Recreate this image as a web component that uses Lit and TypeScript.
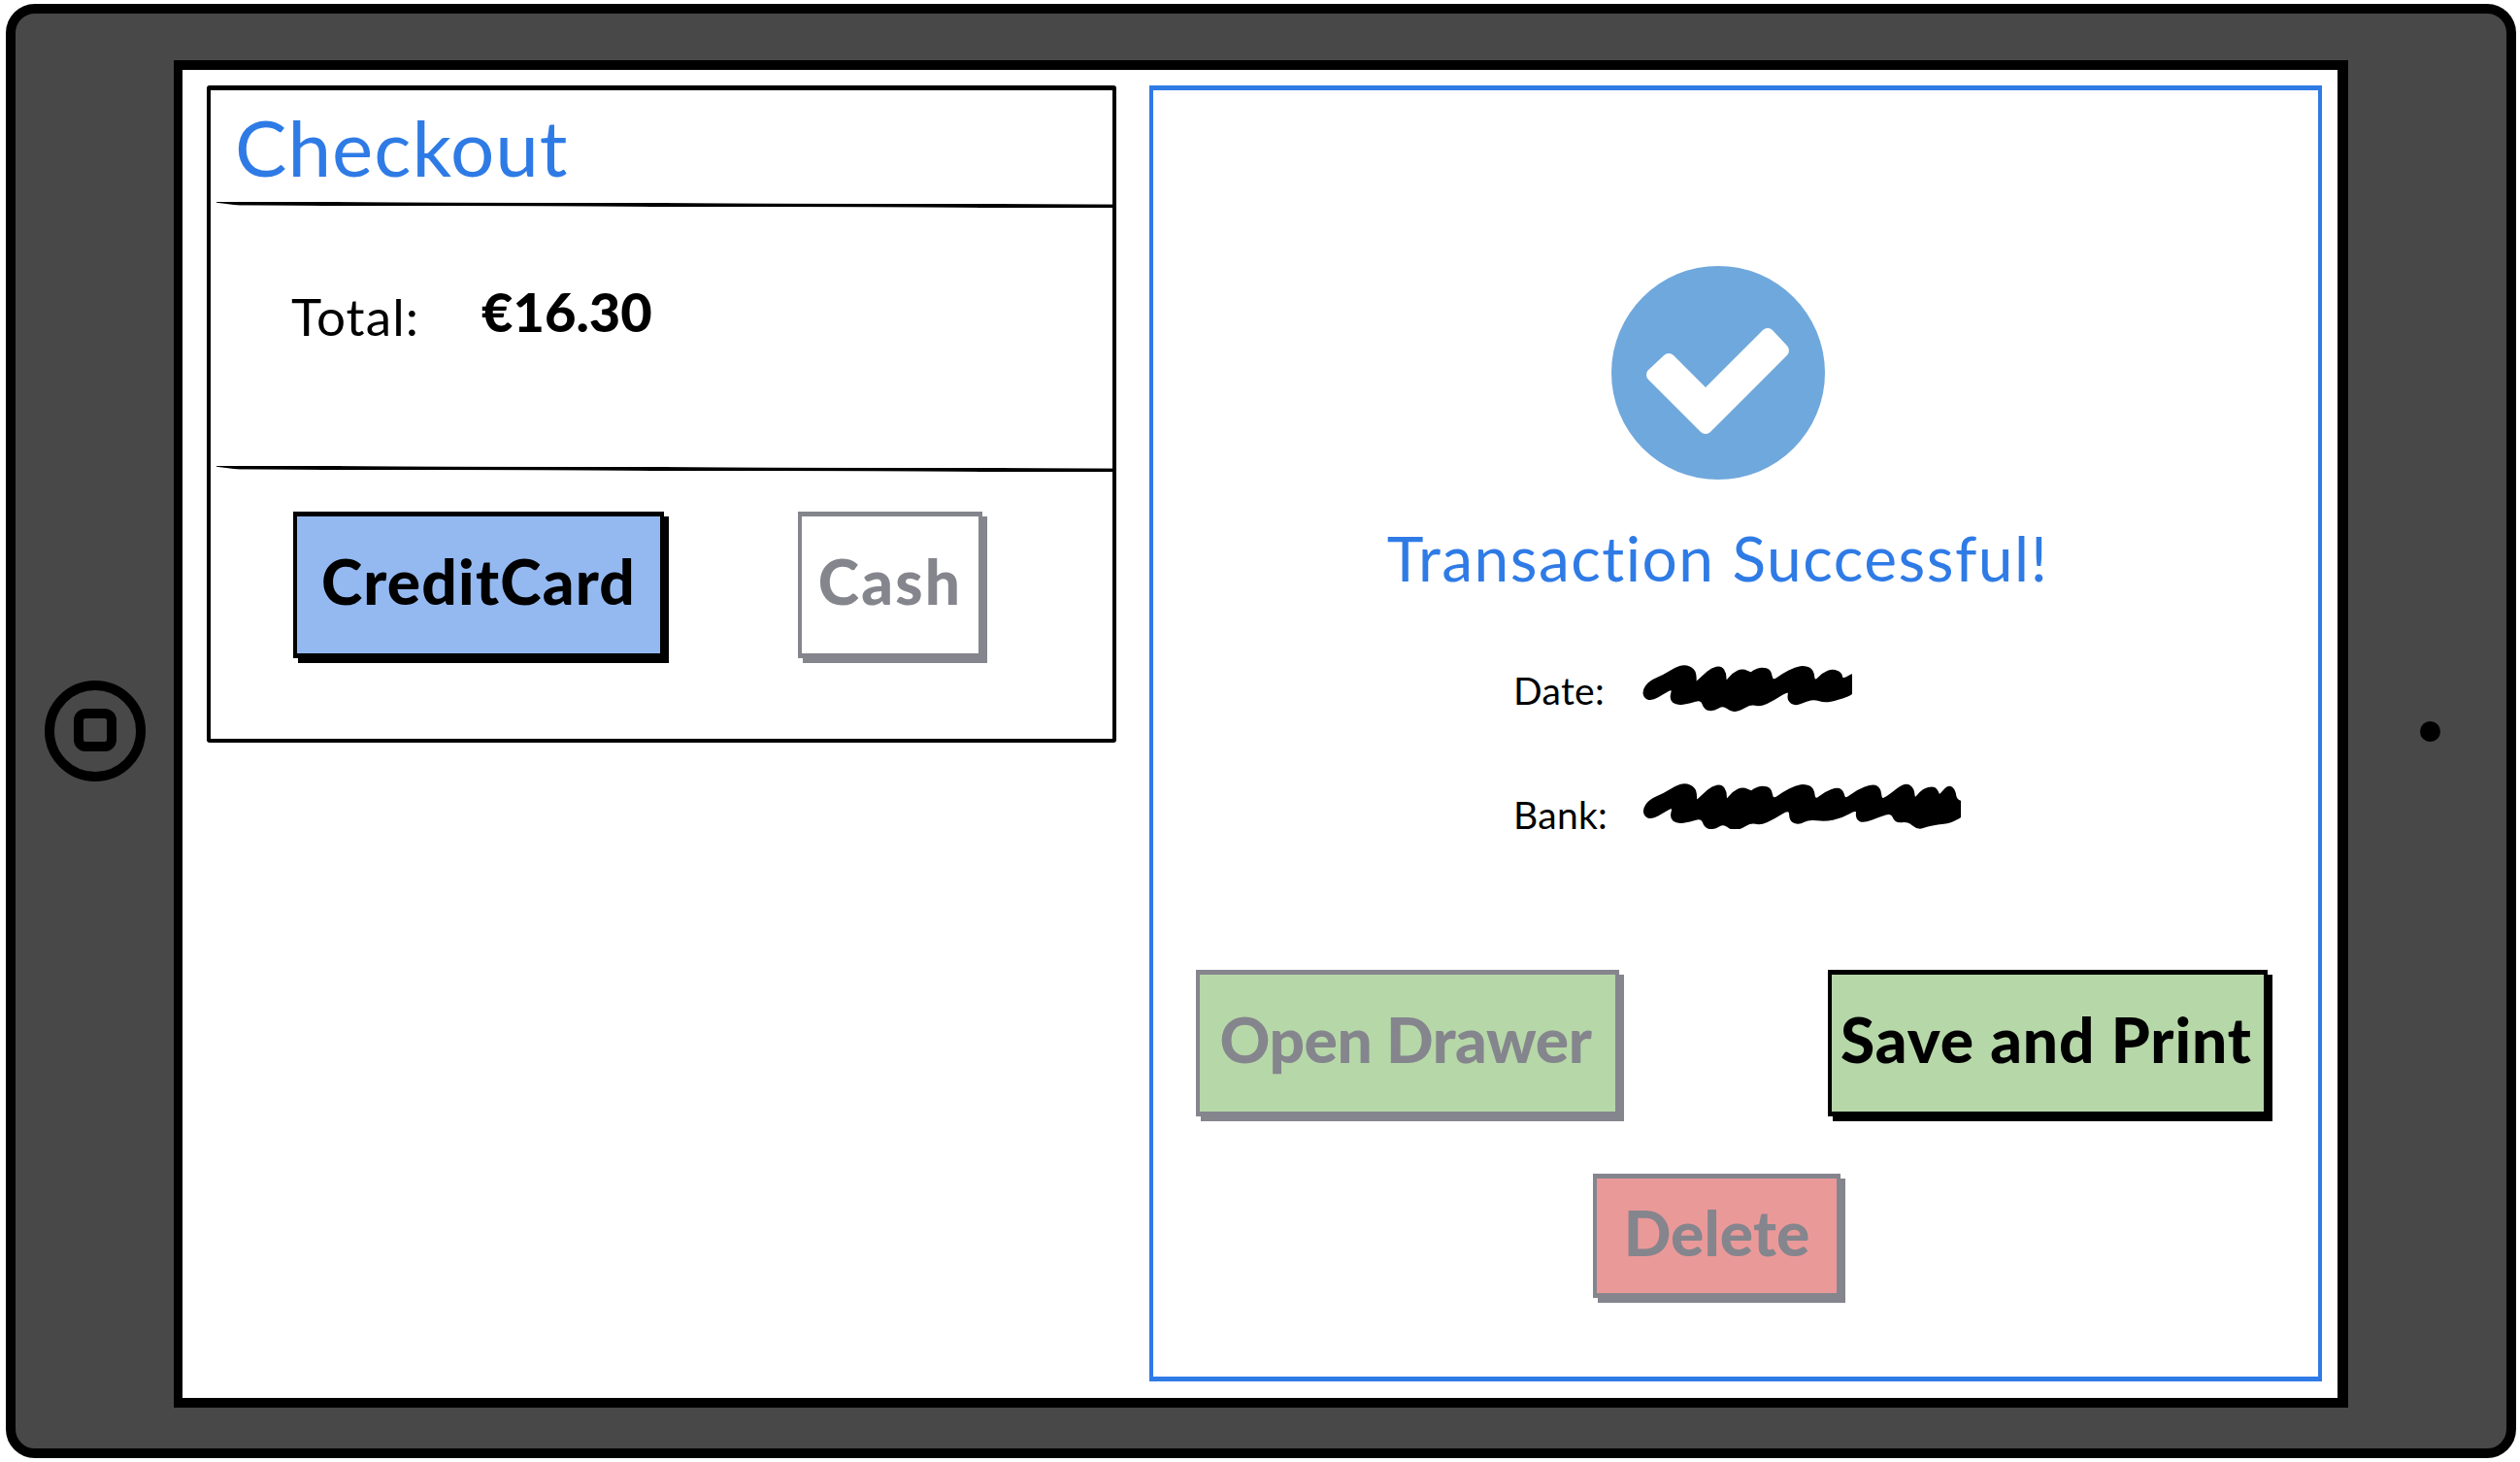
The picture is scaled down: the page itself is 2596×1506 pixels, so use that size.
import { LitElement, html, css, svg } from 'lit';
import { customElement } from 'lit/decorators.js';

type Pt = [number, number];

// smooth closed outline through midpoints, keeps the marker blobs soft
const blob = (pts: Pt[]) => {
  const mid = (a: Pt, b: Pt): Pt => [(a[0] + b[0]) / 2, (a[1] + b[1]) / 2];
  let d = `M${mid(pts[pts.length - 1], pts[0]).join(' ')}`;
  pts.forEach((p, i) => {
    d += ` Q${p.join(' ')} ${mid(p, pts[(i + 1) % pts.length]).join(' ')}`;
  });
  return d + 'Z';
};

const DATE_SCRIBBLE: Pt[] = [
  [36, 125], [55, 98], [100, 78], [135, 56], [165, 46], [194, 58], [200, 85], [197, 104], [225, 78], [250, 56],
  [278, 50], [292, 70], [292, 102], [315, 72], [345, 58], [372, 72], [378, 64], [405, 54], [432, 62], [437, 98],
  [470, 75], [510, 54], [540, 49], [564, 62], [568, 100], [595, 72], [625, 60], [652, 70], [655, 94], [700, 66],
  [700, 130], [640, 152], [600, 160], [570, 150], [545, 155], [510, 170], [486, 155], [492, 120], [440, 154],
  [400, 172], [370, 165], [335, 186], [310, 188], [285, 168], [255, 186], [228, 182], [217, 150], [180, 162],
  [140, 168], [120, 152], [130, 115], [95, 135], [65, 153], [42, 148],
];

const BANK_SCRIBBLE: Pt[] = [
  [36, 491], [55, 464], [100, 444], [135, 422], [165, 412], [194, 424], [200, 451], [197, 470], [225, 444],
  [250, 422], [278, 416], [292, 436], [292, 468], [315, 438], [345, 424], [372, 438], [378, 430], [405, 420],
  [432, 428], [437, 464], [470, 441], [510, 420], [540, 415], [564, 428], [568, 466], [600, 440], [640, 425],
  [656, 436], [662, 464], [700, 434], [750, 415], [772, 428], [775, 464], [800, 450], [850, 410], [876, 428],
  [878, 464], [905, 430], [940, 422], [952, 438], [955, 452], [985, 417], [1004, 432], [1008, 465], [1040, 470],
  [1040, 505], [990, 532], [950, 537], [920, 542], [890, 553], [860, 527], [820, 532], [808, 500], [770, 512],
  [720, 532], [698, 520], [702, 488], [650, 517], [600, 527], [550, 520], [520, 537], [492, 527], [492, 487],
  [440, 520], [400, 538], [370, 531], [335, 552], [310, 554], [285, 534], [255, 552], [228, 548], [217, 516],
  [180, 528], [140, 534], [120, 518], [130, 481], [95, 501], [65, 519], [42, 514],
];

@customElement('app-root')
export class AppRoot extends LitElement {
  static styles = css`
    :host {
      display: block;
      font-family: 'Lato', 'Noto Sans', sans-serif;
      color: #000;
    }

    .tablet {
      box-sizing: border-box;
      width: 2586px;
      height: 1498px;
      margin: 4px 0 0 6px;
      border: 10px solid #000;
      border-radius: 30px;
      background: #484848;
      display: flex;
    }
    .bezel {
      width: 163px;
      flex: none;
      display: flex;
      align-items: center;
      justify-content: center;
    }
    .home {
      width: 104px;
      height: 104px;
      display: block;
    }
    .dot {
      width: 21px;
      height: 21px;
      margin-left: 5px;
      border-radius: 50%;
      background: #000;
    }
    .screen {
      box-sizing: border-box;
      flex: 1;
      margin: 48px 0 42px;
      border: solid #000;
      border-width: 10px 11px 10px 9px;
      background: #fff;
      padding: 16px 16px 17px 25px;
      display: flex;
      gap: 34px;
      align-items: flex-start;
    }

    /* checkout panel */
    .checkout {
      box-sizing: border-box;
      width: 937px;
      height: 677px;
      flex: none;
      border: 4px solid #000;
      border-top-width: 5px;
      border-radius: 3px;
      display: flex;
      flex-direction: column;
    }
    .checkout-head {
      height: 116px;
      flex: none;
      box-sizing: border-box;
      padding: 18px 0 0 25px;
    }
    .checkout-head h1 {
      margin: 0;
      font-size: 80px;
      line-height: 80px;
      font-weight: 400;
      color: #2f7be6;
      letter-spacing: 1px;
    }
    .rule {
      height: 4px;
      flex: none;
      margin-left: 6px;
      background: #000;
      transform: rotate(0.17deg);
      clip-path: polygon(0 0, 100% 0, 100% 100%, 24px 100%, 0 25%);
    }
    .checkout-body {
      height: 268px;
      flex: none;
      box-sizing: border-box;
      padding: 83px 0 0 83px;
      display: flex;
      align-items: flex-start;
    }
    .total-label {
      width: 196px;
      font-size: 53px;
      line-height: 60px;
      letter-spacing: 1.1px;
    }
    .total-value {
      font-size: 56px;
      line-height: 60px;
      font-weight: 900;
      margin-top: -5px;
    }
    .checkout-foot {
      flex: 1;
      box-sizing: border-box;
      padding: 42px 0 0 85px;
      display: flex;
      gap: 138px;
      align-items: flex-start;
    }

    /* buttons */
    .btn {
      box-sizing: border-box;
      height: 151px;
      flex: none;
      border: solid #000;
      border-width: 5px 4px;
      box-shadow: 5px 5px 0 #000;
      display: flex;
      align-items: center;
      justify-content: center;
      font-size: 64px;
      font-weight: 900;
      white-space: nowrap;
      color: #000;
      padding-bottom: 8px;
    }
    .btn.off {
      color: #85858d;
      border-color: #85858d;
      box-shadow: 5px 5px 0 #85858d;
    }
    .btn.blue { background: #94b9f1; }
    .btn.white { background: #fff; }
    .btn.green { background: #b6d7a8; }
    .btn.red { background: #ea9999; }
    .w-credit { width: 382px; letter-spacing: 1.2px; }
    .w-cash { width: 190px; letter-spacing: 2.2px; }
    .w-open { width: 436px; letter-spacing: -0.45px; padding-right: 4px; }
    .w-save { width: 453px; letter-spacing: 0.95px; padding-right: 3px; }
    .w-delete { width: 255px; height: 128px; padding-bottom: 8px; letter-spacing: 0.1px; }

    /* result panel */
    .result {
      box-sizing: border-box;
      flex: 1;
      height: 1335px;
      border: 4px solid #2f7be6;
      border-width: 5px 4px 5px 4px;
      display: flex;
      flex-direction: column;
    }
    .summary {
      width: 1163px;
      display: flex;
      flex-direction: column;
      align-items: center;
      padding-top: 181px;
    }
    .check {
      width: 220px;
      height: 220px;
      display: block;
    }
    .title {
      margin: 45px 0 0;
      font-size: 64px;
      line-height: 72px;
      font-weight: 400;
      color: #2f7be6;
      letter-spacing: 1.5px;
    }
    .facts {
      align-self: flex-start;
      margin: 0 0 0 371px;
      display: flex;
      flex-direction: column;
    }
    .fact {
      display: flex;
      align-items: flex-start;
    }
    .fact span {
      width: 133px;
      flex: none;
      font-size: 39px;
      line-height: 44px;
      letter-spacing: 0.3px;
    }
    .fact svg {
      display: block;
    }
    .fact path {
      fill: #000;
      stroke: #000;
      stroke-width: 6px;
    }
    .fact-date { margin-top: 74px; }
    .fact-date span { padding-top: 4px; }
    .fact-bank { margin-top: 73px; }
    .fact-bank span { padding-top: 11px; }
    .actions {
      margin-top: 138px;
      padding: 0 52px 0 44px;
      display: flex;
      justify-content: space-between;
    }
    .delete-row {
      width: 1161px;
      margin-top: 59px;
      display: flex;
      justify-content: center;
    }
  `;

  render() {
    return html`
      <div class="tablet">
        <div class="bezel">
          <svg class="home" viewBox="0 0 104 104">
            <circle cx="52" cy="52" r="47" fill="none" stroke="#000" stroke-width="10"></circle>
            <rect x="35" y="34" width="34" height="34" rx="7" fill="none" stroke="#000" stroke-width="10"></rect>
          </svg>
        </div>

        <div class="screen">
          <section class="checkout">
            <div class="checkout-head"><h1>Checkout</h1></div>
            <div class="rule"></div>
            <div class="checkout-body">
              <div class="total-label">Total:</div>
              <div class="total-value">€16.30</div>
            </div>
            <div class="rule"></div>
            <div class="checkout-foot">
              <div class="btn blue w-credit">CreditCard</div>
              <div class="btn white off w-cash">Cash</div>
            </div>
          </section>

          <section class="result">
            <div class="summary">
              <svg class="check" viewBox="0 0 220 220">
                <circle cx="110" cy="110" r="110" fill="#6fa8dc"></circle>
                <polygon
                  points="97,135 161,71 176,87 97,166 43,112 59,97"
                  fill="#fff"
                  stroke="#fff"
                  stroke-width="14"
                  stroke-linejoin="round"
                ></polygon>
              </svg>
              <h2 class="title">Transaction Successful!</h2>
              <div class="facts">
                <div class="fact fact-date">
                  <span>Date:</span>
                  <svg width="216" height="48" viewBox="36 45 648 145">
                    ${svg`<path d=${blob(DATE_SCRIBBLE)}></path>`}
                  </svg>
                </div>
                <div class="fact fact-bank">
                  <span>Bank:</span>
                  <svg width="328" height="48" viewBox="36 408 984 145">
                    ${svg`<path d=${blob(BANK_SCRIBBLE)}></path>`}
                  </svg>
                </div>
              </div>
            </div>
            <div class="actions">
              <div class="btn green off w-open">Open Drawer</div>
              <div class="btn green w-save">Save and Print</div>
            </div>
            <div class="delete-row">
              <div class="btn red off w-delete">Delete</div>
            </div>
          </section>
        </div>

        <div class="bezel"><div class="dot"></div></div>
      </div>
    `;
  }
}
